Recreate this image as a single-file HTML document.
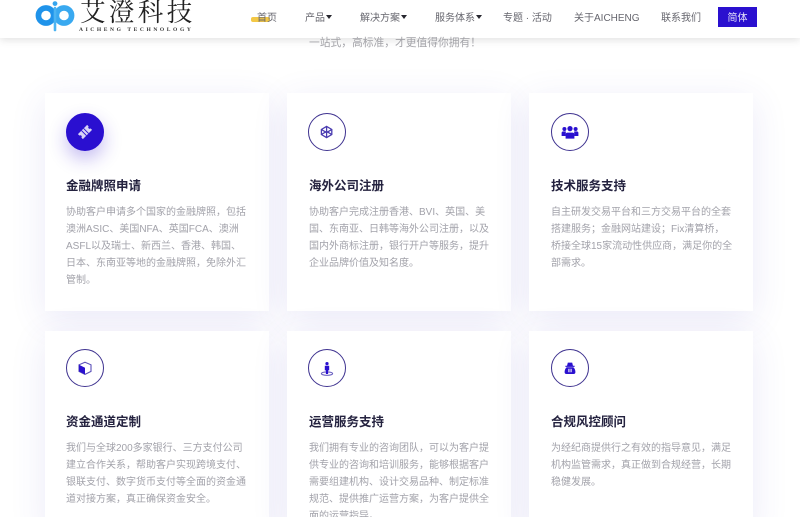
<!DOCTYPE html>
<html lang="zh"><head><meta charset="utf-8">
<style>
*{margin:0;padding:0;box-sizing:border-box}
html,body{width:800px;height:517px;overflow:hidden;background:#fff;font-family:"Liberation Sans","Noto Sans CJK SC",sans-serif}
.abs{position:absolute;white-space:nowrap}
#wrap{position:relative;width:800px;height:517px;overflow:hidden;background:#fff}
#hdr{position:absolute;left:0;top:0;width:800px;height:38px;background:#fff;box-shadow:0 2px 8px rgba(0,0,0,.12);z-index:5}
.nav{position:absolute;top:11px;font-size:10px;line-height:15px;color:#66666e;white-space:nowrap}
.car{display:inline-block;width:0;height:0;border-left:3.5px solid transparent;border-right:3.5px solid transparent;border-top:4px solid #26262e;margin-left:1px;vertical-align:2px}
.card{position:absolute;width:224px;background:#fff;box-shadow:0 8px 34px rgba(70,60,190,.11)}
.ic{position:absolute;width:38px;height:38px;border:1.8px solid #3f3390;border-radius:50%;background:#fff}
.ic svg{position:absolute;left:0;top:0}
.t{position:absolute;font-size:12.5px;font-weight:700;line-height:18px;color:#24223f;white-space:nowrap}
.d{position:absolute;font-size:10px;line-height:17px;color:#a2a2aa;white-space:nowrap}
</style></head><body><div id="wrap">

<div class="abs" style="left:309px;top:35px;font-size:10.75px;line-height:16px;color:#a3a3a8;z-index:6">一站式，高标准，才更值得你拥有！</div>

<div class="card" style="left:45px;top:93px;height:218px"></div>
<div class="card" style="left:287px;top:93px;height:218px"></div>
<div class="card" style="left:529px;top:93px;height:218px"></div>
<div class="card" style="left:45px;top:331px;height:200px"></div>
<div class="card" style="left:287px;top:331px;height:200px"></div>
<div class="card" style="left:529px;top:331px;height:200px"></div>

<div class="ic" style="left:66px;top:113px;background:#2a0fd0;border-color:#2a0fd0;box-shadow:0 8px 18px rgba(60,30,210,.3)">
<svg width="36" height="36" viewBox="0 0 36 36"><g transform="rotate(-45 18 18)"><path d="M11.5 14.5h13v2.2a1.3 1.3 0 0 0 0 2.6v2.2h-13v-2.2a1.3 1.3 0 0 0 0-2.6z" fill="#d8d3f5"/><path d="M16.5 14.5v7M19.5 14.5v7" stroke="#2a0fd0" stroke-width=".9"/></g></svg></div>
<div class="t" style="left:66px;top:177px">金融牌照申请</div>
<div class="d" style="left:66px;top:204px">协助客户申请多个国家的金融牌照，包括<br>澳洲ASIC、美国NFA、英国FCA、澳洲<br>ASFL以及瑞士、新西兰、香港、韩国、<br>日本、东南亚等地的金融牌照，免除外汇<br>管制。</div>

<div class="ic" style="left:308px;top:113px">
<svg width="36" height="36" viewBox="0 0 36 36"><g fill="none" stroke="#4a3cb0" stroke-width="1.3"><path d="M17.6 12.4l5.2 3.1v5l-5.2 3.1-5.2-3.1v-5z"/><path d="M12.4 15.5l5.2 3.1 5.2-3.1M17.6 18.6v5M12.4 20.5l5.2-3.1 5.2 3.1M17.6 12.4v5"/></g></svg></div>
<div class="t" style="left:309px;top:177px">海外公司注册</div>
<div class="d" style="left:309px;top:204px">协助客户完成注册香港、BVI、英国、美<br>国、东南亚、日韩等海外公司注册，以及<br>国内外商标注册，银行开户等服务，提升<br>企业品牌价值及知名度。</div>

<div class="ic" style="left:551px;top:113px">
<svg width="36" height="36" viewBox="0 0 36 36"><g fill="#2a10cf"><circle cx="18" cy="14.6" r="2.6"/><circle cx="12.4" cy="15" r="2"/><circle cx="23.6" cy="15" r="2"/><path d="M9.6 22v-3q0-1.6 2-1.6h2.2v4.6zM26.4 22v-3q0-1.6-2-1.6h-2.2v4.6z"/><path d="M13.6 24.6v-4q0-2 2-2h4.8q2 0 2 2v4z"/></g></svg></div>
<div class="t" style="left:551px;top:177px">技术服务支持</div>
<div class="d" style="left:551px;top:204px">自主研发交易平台和三方交易平台的全套<br>搭建服务；金融网站建设；Fix清算桥，<br>桥接全球15家流动性供应商，满足你的全<br>部需求。</div>

<div class="ic" style="left:66px;top:349px">
<svg width="36" height="36" viewBox="0 0 36 36"><path d="M18 12.2l6 2.6v6.6l-6 3-6-3v-6.6z" fill="#fff" stroke="#5a4fb8" stroke-width="1.1"/><path d="M12 14.8l6 3v6.6l-6-3z" fill="#2a10cf"/></svg></div>
<div class="t" style="left:66px;top:413px">资金通道定制</div>
<div class="d" style="left:66px;top:440px">我们与全球200多家银行、三方支付公司<br>建立合作关系，帮助客户实现跨境支付、<br>银联支付、数字货币支付等全面的资金通<br>道对接方案，真正确保资金安全。</div>

<div class="ic" style="left:308px;top:349px">
<svg width="36" height="36" viewBox="0 0 36 36"><ellipse cx="18" cy="23.6" rx="5.6" ry="1.7" fill="none" stroke="#6a5fc0" stroke-width="1.1"/><circle cx="18" cy="13.6" r="1.6" fill="#2a10cf"/><path d="M15.8 15.8h4.4v4.6h-1.1v3.6h-2.2v-3.6h-1.1z" fill="#2a10cf"/></svg></div>
<div class="t" style="left:309px;top:413px">运营服务支持</div>
<div class="d" style="left:309px;top:440px">我们拥有专业的咨询团队，可以为客户提<br>供专业的咨询和培训服务，能够根据客户<br>需要组建机构、设计交易品种、制定标准<br>规范、提供推广运营方案，为客户提供全<br>面的运营指导。</div>

<div class="ic" style="left:551px;top:349px">
<svg width="36" height="36" viewBox="0 0 36 36"><path d="M15 16l.8-3.4h4.4l.8 3.4z" fill="#2a10cf"/><path d="M13.4 15.8h9.2v1.1h-9.2z" fill="#2a10cf"/><path d="M14.6 17.2q-2 2-2 4.8 0 2 1.8 2h7.2q1.8 0 1.8-2 0-2.8-2-4.8z" fill="#2a10cf"/><rect x="16.2" y="18.8" width="3.6" height="3.4" fill="#d0cbf5"/><path d="M18 18.8v3.4" stroke="#2a10cf" stroke-width=".8"/></svg></div>
<div class="t" style="left:551px;top:413px">合规风控顾问</div>
<div class="d" style="left:551px;top:440px">为经纪商提供行之有效的指导意见，满足<br>机构监管需求，真正做到合规经营，长期<br>稳健发展。</div>

<div id="hdr">
<svg class="abs" style="left:34px;top:0" width="46" height="34" viewBox="0 0 46 34">
<circle cx="12" cy="15.5" r="7.6" fill="none" stroke="#1f93ea" stroke-width="5.6"/>
<circle cx="30" cy="15.5" r="7.6" fill="none" stroke="#39a9f0" stroke-width="5.6"/>
<circle cx="21" cy="3.6" r="2.4" fill="#35a5ee"/>
<path d="M21 8v22" stroke="#4cb4f2" stroke-width="2.6" stroke-linecap="round"/>
</svg>
<div class="abs" style="left:80px;top:-3px;font-family:'Liberation Serif','Noto Serif CJK SC',serif;font-size:25.5px;line-height:32px;letter-spacing:3.4px;color:#222">艾澄科技</div>
<div class="abs" style="left:79px;top:26px;font-family:'Liberation Serif',serif;font-size:5.5px;line-height:8px;letter-spacing:2.6px;color:#333;font-weight:700">AICHENG TECHNOLOGY</div>

<div class="abs" style="left:251px;top:16.5px;width:19px;height:5px;background:#f3c846;border-radius:2px"></div>
<div class="nav" style="left:257px">首页</div>
<div class="nav" style="left:305px">产品<span class="car"></span></div>
<div class="nav" style="left:360px">解决方案<span class="car"></span></div>
<div class="nav" style="left:435px">服务体系<span class="car"></span></div>
<div class="nav" style="left:503px">专题 · 活动</div>
<div class="nav" style="left:574px">关于AICHENG</div>
<div class="nav" style="left:661px">联系我们</div>
<div class="abs" style="left:718px;top:7px;width:39px;height:20px;background:#2a10cf;color:#e8e6fb;font-size:10px;line-height:21px;padding-top:1px;text-align:center">简体</div>
</div>

</div></body></html>
